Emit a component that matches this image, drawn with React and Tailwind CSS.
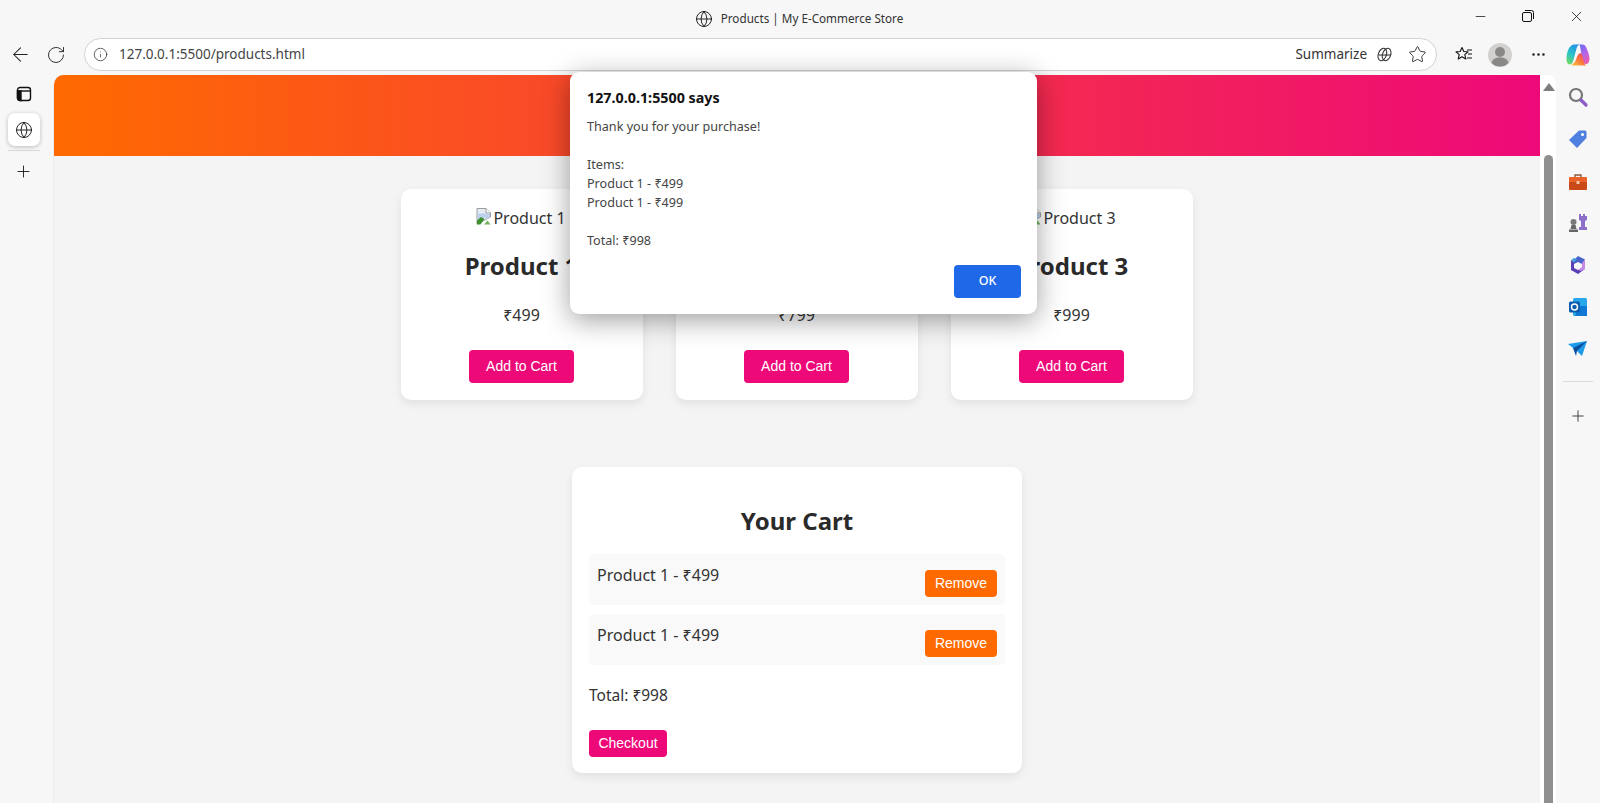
import { ArrowLeft, RotateCw, Info, Star, Plus, Minus, X, Globe, MoreHorizontal } from 'lucide-react';

const UI = "font-['Noto_Sans','Open_Sans',sans-serif]";
const BTN = "font-['Liberation_Sans',Arial,sans-serif] text-white cursor-pointer";

function BrokenImage() {
  return (
    <svg width="17" height="17" viewBox="0 0 17 17" className="inline-block align-[-1px] -ml-px">
      <path d="M1 .5h9l4.500 4.500v4L1 16z" fill="#e6ecf6" stroke="#9c9c9c" />
      <path d="M10 .5v4.500h4.500" fill="#fff" stroke="#9c9c9c" />
      <path d="M1.500 5.500h8l4.500.5v3l-3 2-2-1.500-4 3-3.500 2z" fill="#bcd0ee" />
      <path d="M1 16.500v-4l4-3.500 3.500 2-4 5.500z" fill="#3f9130" />
      <path d="M8 16.500l3.500-4 3 4z" fill="#6fb35d" />
    </svg>
  );
}

function ProductCard({ name, price }) {
  return (
    <div className="w-[242px] h-[211px] bg-white rounded-[10px] shadow-[0_4px_10px_rgba(0,0,0,0.08)] px-4 pt-4 flex flex-col items-center text-[#333]">
      <div className="h-[26px] text-[16px] leading-[26px] whitespace-nowrap">
        <BrokenImage />
        {name}
      </div>
      <h3 className="mt-[19px] h-[32px] text-[24px] leading-[32px] font-bold text-[#2a2a2a]">{name}</h3>
      <p className="mt-[21px] h-[24px] text-[16px] leading-[24px]">{price}</p>
      <button className={`${BTN} mt-[23px] w-[105px] h-[33px] rounded-[4px] bg-[#ee0979] text-[14px]`}>
        Add to Cart
      </button>
    </div>
  );
}

function CartItem() {
  return (
    <div className="h-[51px] bg-[#f9f9f9] rounded-[5px] pl-2 pr-2 pt-[9px] flex justify-between">
      <span className="text-[16px] leading-[24px] text-[#333]">Product 1 - ₹499</span>
      <button className={`${BTN} mt-[7px] w-[72px] h-[27px] rounded-[4px] bg-[#ff6a00] text-[14px]`}>Remove</button>
    </div>
  );
}

function SideIcon({ children }) {
  return <div className="h-[42px] flex items-center justify-center">{children}</div>;
}

function Sidebar() {
  return (
    <div className="w-[44px] shrink-0 flex flex-col items-center pt-[1px]">
      <SideIcon>
        <svg width="22" height="22" viewBox="0 0 22 22" fill="none">
          <circle cx="9" cy="9" r="6" stroke="#757575" strokeWidth="2.2" />
          <path d="M14 14l5 5" stroke="#8a5cc4" strokeWidth="3.2" strokeLinecap="round" />
        </svg>
      </SideIcon>
      <SideIcon>
        <svg width="20" height="20" viewBox="0 0 20 20">
          <path d="M11 1.500h6a1.500 1.500 0 0 1 1.500 1.500v6L9 19 1 11z" fill="#4f7fdf" />
          <circle cx="14.500" cy="5.500" r="1.500" fill="#fff" />
        </svg>
      </SideIcon>
      <SideIcon>
        <svg width="20" height="20" viewBox="0 0 20 20" fill="none" className="mt-[2px]">
          <path d="M7 5V3h6v2" stroke="#8a5a44" strokeWidth="1.400" />
          <rect x="1" y="5" width="18" height="6" rx="1" fill="#e8622a" />
          <rect x="1" y="10" width="18" height="8" rx="1" fill="#c94a18" />
          <rect x="8.500" y="9" width="3" height="3" fill="#f3c6a6" />
        </svg>
      </SideIcon>
      <SideIcon>
        <svg width="20" height="20" viewBox="0 0 20 20">
          <path d="M11 1h2v2h2V1h2v2h2V1v6l-2 1v6h2v3h-8v-3h2V8l-2-1z" fill="#8b6fc9" />
          <circle cx="5.500" cy="9" r="3" fill="#7a7a7a" />
          <path d="M3.500 12h4l1 4h-6zM1 16.500h9V19H1z" fill="#666" />
        </svg>
      </SideIcon>
      <SideIcon>
        <svg width="20" height="20" viewBox="0 0 20 20" fill="none">
          <path d="M10 1l7 3.500-3 4.500-4-2-4 2V5z" fill="#4a62c9" />
          <path d="M3 5l3 2v6l4 2 7-1-7 5-7-4z" fill="#5b3fb5" />
          <path d="M17 5v9l-4 2-3-1 4-3V8z" fill="#c58ae6" />
          <path d="M3 5l3-2 3 1-3 3z" fill="#3fa3d9" />
        </svg>
      </SideIcon>
      <SideIcon>
        <svg width="20" height="20" viewBox="0 0 20 20">
          <rect x="5" y="1" width="14" height="18" rx="1.500" fill="#28a8ea" />
          <path d="M11 9h8v10H7z" fill="#0f78d4" />
          <rect x="1" y="4.500" width="11" height="11" rx="1.500" fill="#0a5cb0" />
          <circle cx="6.500" cy="10" r="3" fill="none" stroke="#fff" strokeWidth="1.500" />
        </svg>
      </SideIcon>
      <SideIcon>
        <svg width="20" height="20" viewBox="0 0 20 20">
          <path d="M0 5l19-3-5 15-5-5z" fill="#1e9be8" />
          <path d="M5 9l14-7-10 10-1 5z" fill="#0b4fa0" />
        </svg>
      </SideIcon>
      <div className="mt-[11px] w-[30px] h-px bg-[#dcdcdc]" />
      <div className="mt-[25px] text-[#222]">
        <Plus size={18} strokeWidth={1.100} />
      </div>
    </div>
  );
}

function FavoritesIcon() {
  return (
    <svg width="20" height="20" viewBox="0 0 20 20" fill="none" stroke="#111" strokeWidth="1.100" strokeLinejoin="round">
      <path d="M8 2.500l1.800 4 4.200.4-3.200 2.800 1 4.300L8 11.800l-3.800 2.200 1-4.300L2 6.900l4.200-.4z" />
      <path d="M13 5h5M14 9h4M13 13h5" />
    </svg>
  );
}

function CopilotLogo() {
  return (
    <svg width="24" height="24" viewBox="0 0 24 24">
      <defs>
        <linearGradient id="cpA" x1="0.700" y1="0" x2="0.200" y2="1">
          <stop offset="0" stopColor="#1f8fe8" />
          <stop offset="0.550" stopColor="#2cc4c8" />
          <stop offset="1" stopColor="#6fd860" />
        </linearGradient>
        <linearGradient id="cpB" x1="0.200" y1="0" x2="0.800" y2="1">
          <stop offset="0" stopColor="#6a6cf0" />
          <stop offset="0.500" stopColor="#b566e8" />
          <stop offset="1" stopColor="#f25aa8" />
        </linearGradient>
        <linearGradient id="cpC" x1="0" y1="1" x2="1" y2="0">
          <stop offset="0" stopColor="#f9c83a" />
          <stop offset="0.500" stopColor="#f8743c" />
          <stop offset="1" stopColor="#f0407a" />
        </linearGradient>
      </defs>
      <path d="M8 1.500h7c-2.500 0-3.800 1.500-4.500 4L7.500 17c-.6 2.500-2 4.500-4 4.500C1.500 21.500.5 18.500.5 15.500.5 8 4 1.500 8 1.500z" fill="url(#cpA)" />
      <path d="M13 1.500h3.500c2 0 3.200 1.500 4 3.500 1.500 3.500 3 7 3 11 0 3-1.500 5-3.500 5-2 0-3-1.500-3.500-4L14.500 6c-.4-2.500-.5-4.500-1.500-4.500z" fill="url(#cpB)" />
      <path d="M7 20.500c2-.5 2.500-3 3.500-5.500 1-2.800 2.500-5 4-5 1.200 0 1.500 1.500 2 3.500l1 4c.4 2 1.500 5 3.500 5H5c.7 0 1.300-1.500 2-2z" fill="url(#cpC)" />
    </svg>
  );
}

export default function App() {
  return (
    <div className={`${UI} relative w-[1600px] h-[803px] overflow-hidden bg-[#f7f7f7] flex flex-col`}>
      {/* Title bar */}
      <div className="relative h-[38px] shrink-0 flex items-center justify-center gap-[8px] pr-[2px] pb-[1px] text-[11.700px] text-[#333]">
        <Globe size={18} strokeWidth={1.200} className="text-[#111]" />
        <span>Products | My E-Commerce Store</span>
        <div className="absolute right-0 top-0 h-[32px] flex items-center text-[#111]">
          <div className="w-[48px] flex justify-center"><Minus size={15} strokeWidth={1.200} /></div>
          <div className="w-[48px] flex justify-center">
            <svg width="12" height="12" viewBox="0 0 12 12" fill="none" stroke="currentColor">
              <rect x="0.500" y="2.500" width="9" height="9" rx="1.500" />
              <path d="M3 .5h6.500a2 2 0 0 1 2 2V9" />
            </svg>
          </div>
          <div className="w-[48px] flex justify-center"><X size={17} strokeWidth={1.100} /></div>
        </div>
      </div>

      {/* Toolbar */}
      <div className="h-[37px] shrink-0 flex items-start text-[#222]">
        <div className="w-[38px] h-[33px] pl-[2px] flex items-center justify-center"><ArrowLeft size={23} strokeWidth={1.100} /></div>
        <div className="w-[36px] h-[33px] flex items-center justify-center"><RotateCw size={20} strokeWidth={1.100} /></div>
        <div className="ml-[10px] w-[1353px] h-[33px] bg-white border border-[#d2d2d2] rounded-full flex items-center pl-[2px] pr-[9px]">
          <Info size={15} strokeWidth={1.100} className="ml-[6px]" />
          <span className="ml-[11px] text-[13.500px] text-[#444] flex-1">127.0.0.1:5500/products.html</span>
          <span className="text-[13.500px] text-[#333]">Summarize</span>
          <svg width="17" height="17" viewBox="0 0 16 16" fill="none" stroke="#333" strokeWidth="1" className="ml-[9px]">
            <ellipse cx="6" cy="8" rx="3.800" ry="6" transform="rotate(20 6 8)" />
            <ellipse cx="10" cy="8" rx="3.800" ry="6" transform="rotate(20 10 8)" />
            <path d="M2.500 8.500h11" />
          </svg>
          <Star size={19} strokeWidth={1.100} className="ml-[15px]" />
        </div>
        <div className="ml-[17px] w-[20px] h-[33px] flex items-center justify-center">
          <FavoritesIcon />
        </div>
        <div className="ml-[14px] w-[24px] h-[33px] flex items-center justify-center">
          <svg width="24" height="24" viewBox="0 0 24 24">
            <circle cx="12" cy="12" r="12" fill="#d3d1cf" />
            <circle cx="12" cy="9" r="5" fill="#8a8886" />
            <path d="M3.500 20c1-4 4-5.500 8.500-5.500s7.500 1.500 8.500 5.500a12 12 0 0 1-17 0z" fill="#8a8886" />
          </svg>
        </div>
        <div className="ml-[16px] w-[20px] h-[33px] flex items-center justify-center"><MoreHorizontal size={17} strokeWidth={1.700} /></div>
        <div className="ml-[18px] w-[24px] h-[33px] flex items-center justify-center">
          <CopilotLogo />
        </div>
      </div>

      {/* Body */}
      <div className="flex flex-1 min-h-0">
        <div className="w-[53px] shrink-0 flex flex-col items-center pr-[6px] text-[#111]">
          <div className="h-[38px] flex items-center justify-center">
            <svg width="16" height="16" viewBox="0 0 16 16" fill="none" stroke="#111" strokeWidth="1.400">
              <rect x="1.500" y="1.500" width="13" height="13" rx="2.500" />
              <path d="M1.500 5h13" />
              <path d="M1.500 5h3.500v9.500H4a2.500 2.500 0 0 1-2.500-2.500z" fill="#111" />
            </svg>
          </div>
          <div className="w-[32px] h-[33px] bg-white rounded-[7px] shadow-[0_1px_4px_rgba(0,0,0,0.25)] flex items-center justify-center">
            <Globe size={18} strokeWidth={1.200} />
          </div>
          <div className="mt-[4px] w-[32px] h-px bg-[#d8d8d8]" />
          <div className="mt-[11px]"><Plus size={19} strokeWidth={1.100} /></div>
        </div>

        <main className="w-[1487px] shrink-0 bg-[#f4f4f4] rounded-tl-[10px] overflow-hidden border-l border-[#ececec]">
          <div className="h-[81px] bg-[linear-gradient(90deg,#ff6a00,#ee0979)]" />
          <div className="mt-[33px] flex justify-center gap-[33px] pr-[1px]">
            <ProductCard name="Product 1" price="₹499" />
            <ProductCard name="Product 2" price="₹799" />
            <ProductCard name="Product 3" price="₹999" />
          </div>
          <section className="mt-[67px] mx-auto w-[450px] h-[306px] bg-white rounded-[10px] shadow-[0_4px_10px_rgba(0,0,0,0.08)] px-[17px] pt-[30px]">
            <h2 className="h-[48px] text-center text-[24px] leading-[48px] font-bold text-[#2a2a2a]">Your Cart</h2>
            <div className="mt-[9px] flex flex-col gap-[9px]">
              <CartItem />
              <CartItem />
            </div>
            <p className="mt-[18px] h-[24px] text-[15.500px] leading-[24px] text-[#333]">Total: ₹998</p>
            <button className={`${BTN} mt-[23px] block w-[78px] h-[27px] rounded-[4px] bg-[#ee0979] text-[14px]`}>Checkout</button>
          </section>
        </main>

        <div className="w-[16px] shrink-0 bg-white rounded-tr-[8px] flex flex-col items-center pl-[1px]">
          <div className="mt-[8px] w-0 h-0 border-x-[6px] border-x-transparent border-b-[8px] border-b-[#7d7d7d]" />
          <div className="mt-[64px] w-[9px] flex-1 bg-[#8f8f8f] rounded-t-full" />
        </div>

        <Sidebar />
      </div>

      {/* Alert dialog */}
      <div role="dialog" className="absolute left-[570px] top-[72px] w-[467px] h-[242px] bg-white rounded-[9px] shadow-[0_6px_28px_rgba(0,0,0,0.38)] pl-[17px] pr-[16px] pt-[16px]">
        <h4 className="text-[14.300px] leading-[20px] font-bold text-[#111]">127.0.0.1:5500 says</h4>
        <p className="mt-[9px] text-[12.600px] leading-[19px] text-[#444] whitespace-pre-line">
          {'Thank you for your purchase!\n\nItems:\nProduct 1 - ₹499\nProduct 1 - ₹499\n\nTotal: ₹998'}
        </p>
        <div className="mt-[15px] flex justify-end">
          <button className="w-[67px] h-[33px] rounded-[4px] bg-[#1f69e8] text-white text-[12.500px] font-medium cursor-pointer">OK</button>
        </div>
      </div>
    </div>
  );
}
